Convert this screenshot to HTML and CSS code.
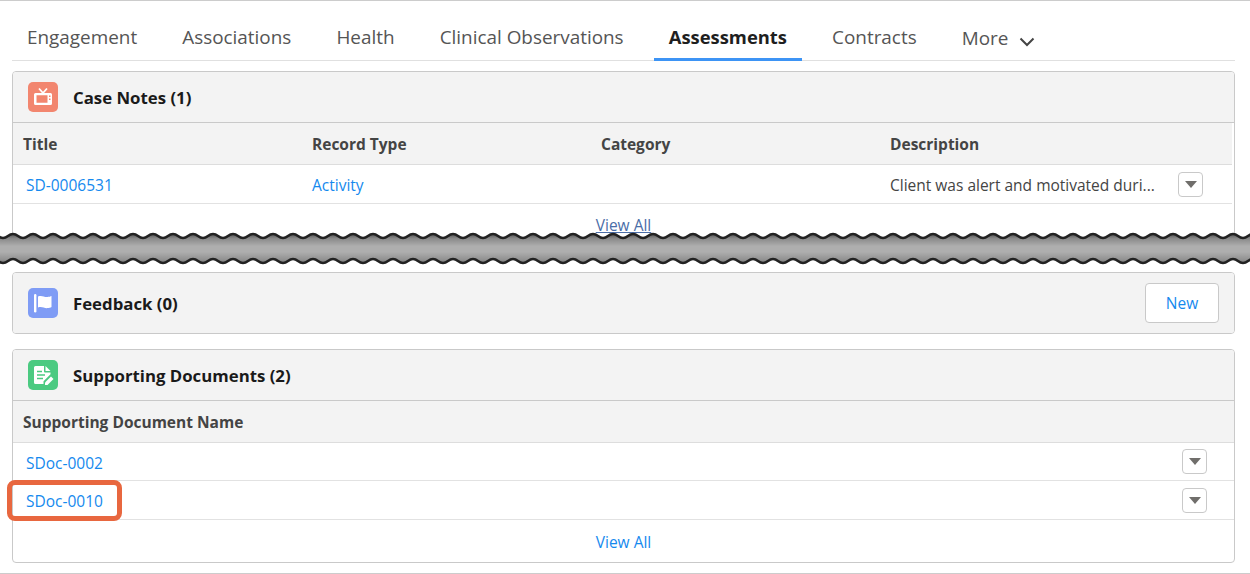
FILE: index.html
```html
<!DOCTYPE html>
<html lang="en">
<head>
<meta charset="utf-8">
<title>Assessments</title>
<link rel="stylesheet" href="styles.css">
</head>
<body>
<main class="page">
  <nav class="tabs">
    <a class="tab">Engagement</a>
    <a class="tab">Associations</a>
    <a class="tab">Health</a>
    <a class="tab">Clinical Observations</a>
    <a class="tab active">Assessments</a>
    <a class="tab">Contracts</a>
    <a class="tab more">More<svg class="chev" viewBox="0 0 16 10" width="16" height="10"><path d="M1.500 1.500 8 8l6.500-6.500" fill="none" stroke="#444" stroke-width="2"/></svg></a>
  </nav>

  <section class="card card-notes">
    <header class="card-head">
      <span class="icon icon-notes">
        <svg viewBox="0 0 30 30" width="30" height="30"><path d="M11 6.500 15 11 19 6.500" fill="none" stroke="#fff" stroke-width="1.800"/><path fill="#fff" fill-rule="evenodd" d="M7.500 11h15a1.500 1.500 0 0 1 1.500 1.500v9a1.500 1.500 0 0 1-1.500 1.500h-15A1.500 1.500 0 0 1 6 21.500v-9A1.500 1.500 0 0 1 7.500 11Zm1 2.200v7.600h11v-7.600Zm12.500 .3v1.500h1.500v-1.500Zm0 3v1.500h1.500v-1.500Z"/></svg>
      </span>
      <h2 class="card-title">Case Notes (1)</h2>
    </header>
    <div class="thead cols inset">
      <span>Title</span><span>Record Type</span><span>Category</span><span>Description</span>
    </div>
    <div class="row cols inset">
      <a class="link first">SD-0006531</a>
      <a class="link">Activity</a>
      <span></span>
      <span class="desc">Client was alert and motivated duri...</span>
      <button class="menu menu-notes"><i class="tri"></i></button>
    </div>
    <footer class="view-all"><a>View All</a></footer>
  </section>

  <section class="card">
    <header class="card-head card-head-solo">
      <span class="icon icon-flag">
        <svg viewBox="0 0 30 30" width="30" height="30"><rect x="6" y="6" width="2.400" height="18.500" rx="1.200" fill="#fff"/><path fill="#fff" d="M10 8.500c4-1.500 6 .800 9.500 .500 1.500-.100 3-.500 4-1v11c-1 .600-2.500 1-4 1.100-3.500 .300-5.500-2-9.500-.600Z"/></svg>
      </span>
      <h2 class="card-title">Feedback (0)</h2>
      <button class="btn">New</button>
    </header>
  </section>

  <section class="card card-docs">
    <header class="card-head">
      <span class="icon icon-doc">
        <svg viewBox="0 0 30 30" width="30" height="30"><path fill="#fff" d="M7.500 6H16v5.500a1 1 0 0 0 1 1h5.500v1.800l-7 7V24h-8A1.500 1.500 0 0 1 6 22.500v-15A1.500 1.500 0 0 1 7.500 6Z"/><path fill="#fff" d="M17.500 6l5 5h-5Z"/><path stroke="#4bca81" stroke-width="1.600" d="M9 11.500h5M9 15h8M9 18.500h6"/><path fill="#fff" d="M17 22.500v2.500h2.500l6-6-2.500-2.500Z"/></svg>
      </span>
      <h2 class="card-title">Supporting Documents (2)</h2>
    </header>
    <div class="thead thead-docs"><span>Supporting Document Name</span></div>
    <div class="row doc-row">
      <a class="link first">SDoc-0002</a>
      <button class="menu"><i class="tri"></i></button>
    </div>
    <div class="row doc-row doc-row-b">
      <a class="link first">SDoc-0010</a>
      <button class="menu"><i class="tri"></i></button>
      <span class="callout"></span>
    </div>
    <footer class="view-all view-all-docs"><a>View All</a></footer>
  </section>

  <svg class="tear" width="1250" height="36" aria-hidden="true">
    <defs>
      <linearGradient id="band" x1="0" y1="0" x2="0" y2="1">
        <stop offset="0" stop-color="#555"/>
        <stop offset=".16" stop-color="#8a8a8a"/>
        <stop offset=".42" stop-color="#aeaeae"/>
        <stop offset=".62" stop-color="#aeaeae"/>
        <stop offset=".9" stop-color="#8f8f8f"/>
        <stop offset="1" stop-color="#777"/>
      </linearGradient>
      <pattern id="tearTile" x="3" y="0" width="20" height="36" patternUnits="userSpaceOnUse">
        <path d="M0 8C5 8 5 4 10 4S15 8 20 8V33C15 33 15 29 10 29S5 33 0 33Z" fill="url(#band)"/>
        <path d="M0 8C5 8 5 4 10 4S15 8 20 8M0 33C5 33 5 29 10 29S15 33 20 33" fill="none" stroke="#222" stroke-width="2.600"/>
      </pattern>
    </defs>
    <rect width="1250" height="36" fill="url(#tearTile)"/>
  </svg>
</main>
</body>
</html>
```
FILE: styles.css
```css
* { box-sizing: border-box; }
html, body { margin: 0; padding: 0; background: #fff; }
body { font-family: "Open Sans", "Noto Sans", sans-serif; color: #3e3e3c; }
.page { position: relative; width: 1250px; height: 574px; overflow: hidden; border-top: 1px solid #ccc; border-bottom: 1px solid #ccc; padding: 0 15px 0 12px; }

.tabs { display: flex; gap: 15.100px; height: 60px; border-bottom: 1px solid #e0e0e0; font-size: 18.900px; }
.tab { padding: 0 15px; height: 60px; line-height: 73px; color: #555; white-space: nowrap; }
.tab.active { font-size: 18.400px; line-height: 71px; font-weight: 700; color: #1f1f1f; border-bottom: 3px solid #3d94f5; }
.tab.more { line-height: 75px; }
.chev { margin-left: 11px; vertical-align: -2px; }

.card { border: 1px solid #c9c9c9; border-radius: 4px; background: #fff; }
.card-notes { margin-top: 10px; height: 177px; margin-bottom: 24px; }
.card-docs { height: 214px; margin-top: 15px; }

.card-head { display: flex; align-items: center; height: 51px; padding: 0 15px; background: #f3f3f3; border-bottom: 1px solid #c9c9c9; border-radius: 3px 3px 0 0; }
.card-head-solo { height: 60px; border-bottom: 0; border-radius: 3px; }
.icon { width: 30px; height: 30px; border-radius: 5px; flex: none; display: block; }
.icon svg { display: block; }
.icon-notes { background: #f2866f; }
.icon-flag { background: #7f9cf5; }
.icon-doc { background: #4bca81; }
.card-title { margin: 0 0 0 15px; font-size: 16.800px; font-weight: 700; color: #1a1a1a; flex: 1; }

.btn { font: inherit; font-size: 15.500px; width: 74px; height: 40px; border: 1px solid #c9c9c9; border-radius: 4px; background: #fff; color: #1589ee; padding: 0; }

.thead { height: 42px; display: flex; align-items: center; padding-left: 10px; background: #f3f3f3; border-bottom: 1px solid #ddd; font-size: 15.500px; font-weight: 700; color: #444; }
.thead-docs { padding-top: 1px; }
.cols { display: grid; grid-template-columns: repeat(4, 289px); }
.inset { margin-right: 2px; }
.row { position: relative; height: 39px; border-bottom: 1px solid #e2e2e2; font-size: 15.500px; align-items: center; }
.row.cols { display: grid; padding: 2px 0 0 10px; }
.doc-row { display: flex; height: 38px; padding: 0 27px 0 13px; justify-content: space-between; }
.doc-row .link { padding-top: 3px; }
.doc-row-b { height: 39px; }
.doc-row-b .link { padding-top: 2px; }
.link { color: #1589ee; text-decoration: none; }
.first { padding-left: 3px; }
.doc-row .first { padding-left: 0; }
.desc { white-space: nowrap; color: #444; }

.menu { width: 25px; height: 25px; padding: 0; border: 1px solid #c9c9c9; border-radius: 4px; background: #fff; display: flex; align-items: center; justify-content: center; }
.menu-notes { position: absolute; right: 29px; top: 7px; }
.tri { width: 0; height: 0; border-left: 6px solid transparent; border-right: 6px solid transparent; border-top: 7px solid #706e6b; }

.view-all { text-align: center; font-size: 15.500px; padding-top: 10px; }
.view-all a { color: #4a6da7; text-decoration: underline; }
.view-all-docs { padding-top: 11px; }
.view-all-docs a { color: #1589ee; text-decoration: none; }

.callout { position: absolute; left: -6px; top: -1px; width: 115px; height: 41px; border: 5px solid #e8673f; border-radius: 8px; pointer-events: none; }
.tear { position: absolute; left: 0; top: 229px; display: block; }
```
